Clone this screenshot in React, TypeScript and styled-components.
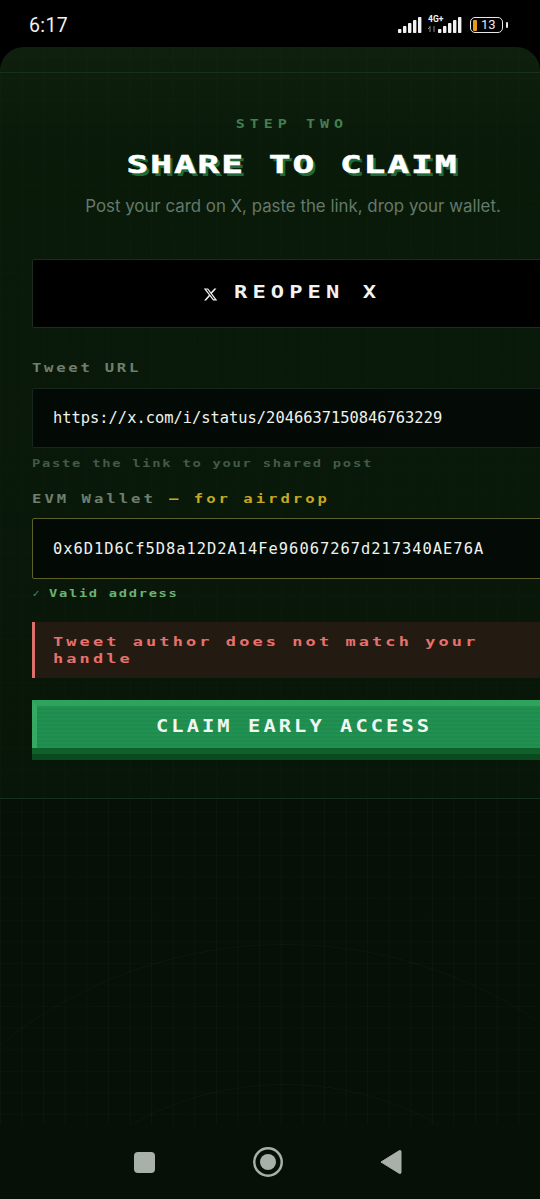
import React from 'react'
import styled, { createGlobalStyle } from 'styled-components'
import { FaXTwitter } from 'react-icons/fa6'

const pixelFont = `"DejaVu Sans Mono", "Liberation Mono", monospace`

const GlobalStyle = createGlobalStyle`
  html, body {
    margin: 0;
    padding: 0;
    width: 540px;
    height: 1199px;
    overflow: hidden;
    background: #000;
  }
  * { box-sizing: border-box; }
`

const Phone = styled.div`
  width: 540px;
  height: 1199px;
  display: flex;
  flex-direction: column;
  background: #000;
  overflow: hidden;
`

const StatusBar = styled.div`
  height: 47px;
  flex: none;
  display: flex;
  align-items: flex-start;
  justify-content: space-between;
  padding: 14px 37px 0 29px;
`

const Clock = styled.span`
  font: 400 19.5px/24px Roboto, sans-serif;
  letter-spacing: 0.4px;
  color: #f2f2f2;
`

const StatusIcons = styled.div`
  display: flex;
  align-items: flex-end;
  height: 19px;
`

const Sim = styled.div`
  position: relative;
  display: flex;
  margin-left: ${p => p.$gap}px;
`

const NetLabel = styled.span`
  position: absolute;
  left: -10px;
  top: -2px;
  font: 700 8.5px/8px Roboto, sans-serif;
  color: #f2f2f2;
`

const NetArrows = styled.svg`
  position: absolute;
  left: -10px;
  bottom: 1px;
`

const Battery = styled.div`
  position: relative;
  width: 33px;
  height: 16px;
  margin-left: 8px;
  border: 1.5px solid #e8e8e8;
  border-radius: 5px;
  display: flex;
  align-items: center;
  padding-left: 2px;

  &::after {
    content: '';
    position: absolute;
    right: -6px;
    top: 4px;
    width: 2px;
    height: 6px;
    border-radius: 1px;
    background: #e8e8e8;
  }
`

const BatteryLevel = styled.i`
  width: 4px;
  height: 11px;
  border-radius: 1px;
  background: #e59a1c;
`

const BatteryText = styled.span`
  margin-left: 4px;
  font: 400 13px/14px Roboto, sans-serif;
  color: #e8e8e8;
`

const Screen = styled.div`
  position: relative;
  flex: 1;
  display: flex;
  flex-direction: column;
  overflow: hidden;
  border-radius: 24px 24px 0 0;
  background-color: #061006;
  background-image:
    linear-gradient(rgba(70, 140, 80, 0.04) 1px, transparent 1px),
    linear-gradient(90deg, rgba(70, 140, 80, 0.06) 1px, transparent 1px);
  background-size: 21.6px 21.6px;
  background-position: 0 9px;
`

const Ring = styled.div`
  position: absolute;
  left: ${p => 285 - p.$radius}px;
  top: ${p => 1353 - p.$radius}px;
  width: ${p => p.$radius * 2}px;
  height: ${p => p.$radius * 2}px;
  border: 1px solid rgba(80, 150, 90, 0.06);
  border-radius: 50%;
`

const Panel = styled.section`
  position: relative;
  height: 752px;
  flex: none;
  overflow: hidden;
  border-bottom: 1px solid #14301a;
  background: linear-gradient(180deg, rgba(20, 42, 20, 0.6), rgba(12, 32, 12, 0.65) 12%, rgba(9, 26, 10, 0.6));
`

const PanelTop = styled.div`
  height: 26px;
  border-bottom: 1px solid #17331c;
`

const Content = styled.div`
  width: 520px;
  margin-left: 32px;
  padding-top: 44px;
  display: flex;
  flex-direction: column;
`

const Pixel = styled.span`
  display: inline-block;
  font-family: ${pixelFont};
  font-weight: 700;
  white-space: pre;
  font-size: ${p => p.$size}px;
  letter-spacing: ${p => p.$track}px;
  color: ${p => p.$color};
  transform: scaleX(${p => p.$stretch ?? 1.3});
  transform-origin: ${p => (p.$center ? 'center' : 'left')};
`

const AirdropNote = styled(Pixel)`
  margin-left: 32px;
`

const Centered = styled.div`
  display: flex;
  justify-content: center;
  align-items: center;
  height: ${p => p.$height}px;
  margin-top: ${p => p.$top ?? 0}px;
`

const Title = styled(Pixel)`
  text-shadow: 2px 3px 0 #1c6b38;
  -webkit-text-stroke: 0.5px #ffffff;
`

const Subtitle = styled.p`
  margin: 15px 0 0 2px;
  height: 24px;
  text-align: center;
  font: 400 16.85px/24px Inter, sans-serif;
  color: #64796a;
`

const ReopenButton = styled.button`
  height: 69px;
  margin-top: 41px;
  display: flex;
  align-items: center;
  justify-content: center;
  gap: 16px;
  background: #000;
  border: 1px solid #1c2c1e;
  border-radius: 2px;
  padding: 0 0 3px;
  color: #f0f0f0;

  svg {
    width: 15px;
    height: 15px;
    margin-top: 4px;
  }
`

const ReopenLabel = styled.div`
  width: 148px;
  text-align: left;
`

const Field = styled.div`
  display: flex;
  flex-direction: column;
  margin-top: ${p => p.$top}px;
`

const FieldLabel = styled.label`
  display: block;
  height: 16px;
  line-height: 16px;
  margin-bottom: ${p => p.$gap}px;
`

const TextInput = styled.input`
  width: 100%;
  height: ${p => (p.$valid ? 61 : 60)}px;
  padding: 0 20px;
  background: linear-gradient(90deg, #030a05, #040b06);
  border: 1px solid ${p => (p.$valid ? '#5c5f28' : '#14271a')};
  border-radius: 2px;
  outline: none;
  font: 400 15.4px/20px "DejaVu Sans Mono", monospace;
  letter-spacing: ${p => (p.$valid ? 1 : 0)}px;
  color: #f0f2ee;
`

const Note = styled.div`
  display: flex;
  align-items: center;
  height: 14px;
  margin-top: ${p => p.$top}px;
  line-height: 14px;
`

const CheckMark = styled.span`
  width: 17px;
  font: 400 10px/14px "DejaVu Sans", sans-serif;
  color: #4c8a57;
`

const ErrorBox = styled.div`
  height: 56px;
  margin-top: 21px;
  padding: 11px 0 0 18px;
  background: #231b12;
  border-left: 3px solid #dc706c;
  display: flex;
  flex-direction: column;
`

const ErrorLine = styled.div`
  height: 16.5px;
  line-height: 16.5px;
`

const ClaimButton = styled.button`
  position: relative;
  height: 60px;
  margin-top: 22px;
  padding: 0 0 15px;
  display: flex;
  align-items: center;
  justify-content: center;
  border: 0;
  border-top: 6px solid #2ea35c;
  border-left: 5px solid #35a862;
  background: repeating-linear-gradient(180deg, #209153 0 2px, #1f8c4e 2px 4px);

  &::after {
    content: '';
    position: absolute;
    left: -5px;
    right: 0;
    bottom: 0;
    height: 12px;
    background: linear-gradient(180deg, #0e5f28 0 6px, #0a4a1f 6px);
  }
`

const NavBar = styled.nav`
  position: absolute;
  left: 0;
  right: 0;
  bottom: 0;
  height: 74px;
  background: #061006;
  display: flex;
  align-items: center;
  padding-left: 134px;
  gap: 97.5px;
`

const bars = [4, 7, 10, 13, 16]

const Signal: React.FC = () => (
  <svg width="24" height="16" viewBox="0 0 24 16">
    {bars.map((h, i) => (
      <rect key={h} x={i * 5} y={16 - h} width="3.4" height={h} rx="0.8" fill="#f2f2f2" />
    ))}
  </svg>
)

const SquareIcon = () => (
  <svg width="21" height="21" viewBox="0 0 21 21">
    <rect width="21" height="21" rx="4" fill="#a9b0aa" />
  </svg>
)

const CircleIcon = () => (
  <svg width="30" height="30" viewBox="0 0 30 30">
    <circle cx="15" cy="15" r="13.75" fill="none" stroke="#a9b0aa" strokeWidth="2.5" />
    <circle cx="15" cy="15" r="8" fill="#a9b0aa" />
  </svg>
)

const BackIcon = () => (
  <svg width="22" height="26" viewBox="0 0 22 26">
    <path d="M1 13 19.4 1.6c.8-.5 1.6 0 1.6.9v21c0 .9-.8 1.4-1.6.9Z" fill="#a9b0aa" stroke="#a9b0aa" strokeLinejoin="round" />
  </svg>
)

export default function App() {
  return (
    <Phone>
      <GlobalStyle />
      <StatusBar>
        <Clock>6:17</Clock>
        <StatusIcons>
          <Signal />
          <Sim $gap={16}>
            <NetLabel>4G+</NetLabel>
            <NetArrows width="8" height="6" viewBox="0 0 8 6">
              <path d="M2 0v6M0 3l2-2 M6 0v6" stroke="#8a8a8a" strokeWidth="1" fill="none" />
            </NetArrows>
            <Signal />
          </Sim>
          <Battery>
            <BatteryLevel />
            <BatteryText>13</BatteryText>
          </Battery>
        </StatusIcons>
      </StatusBar>

      <Screen>
        <Ring $radius={456} />
        <Ring $radius={316} />
        <Panel>
          <PanelTop />
          <Content>
            <Centered $height={14}>
              <Pixel $center $size={12} $track={4} $stretch={1.25} $color="#437f50">STEP TWO</Pixel>
            </Centered>
            <Centered $height={30} $top={18}>
              <Title $center $size={25} $track={1.3} $stretch={1.45} $color="#ffffff">SHARE TO CLAIM</Title>
            </Centered>
            <Subtitle>Post your card on X, paste the link, drop your wallet.</Subtitle>

            <ReopenButton type="button">
              <FaXTwitter />
              <ReopenLabel>
                <Pixel $size={17} $track={3.9} $color="#f2f2f2">REOPEN X</Pixel>
              </ReopenLabel>
            </ReopenButton>

            <Field $top={31}>
              <FieldLabel $gap={13}>
                <Pixel $size={12} $track={2.1} $color="#6f7f6f">Tweet URL</Pixel>
              </FieldLabel>
              <TextInput readOnly value="https://x.com/i/status/2046637150846763229" />
              <Note $top={9}>
                <Pixel $size={11} $track={1.4} $stretch={1.25} $color="#445a47">Paste the link to your shared post</Pixel>
              </Note>
            </Field>

            <Field $top={19}>
              <FieldLabel $gap={12}>
                <Pixel $size={12} $track={2.3} $color="#6f7f6f">EVM Wallet </Pixel>
                <AirdropNote $size={12} $track={2.3} $color="#c4a823">— for airdrop</AirdropNote>
              </FieldLabel>
              <TextInput $valid readOnly value="0x6D1D6Cf5D8a12D2A14Fe96067267d217340AE76A" />
              <Note $top={8}>
                <CheckMark>✓</CheckMark>
                <Pixel $size={11} $track={1.35} $stretch={1.25} $color="#6cb274">Valid address</Pixel>
              </Note>
            </Field>

            <ErrorBox>
              <ErrorLine>
                <Pixel $size={13} $track={2.4} $color="#e8716d">Tweet author does not match your</Pixel>
              </ErrorLine>
              <ErrorLine>
                <Pixel $size={13} $track={2.4} $color="#e8716d">handle</Pixel>
              </ErrorLine>
            </ErrorBox>

            <ClaimButton type="button">
              <Pixel $center $size={17} $track={2.55} $stretch={1.2} $color="#eef8f0">CLAIM EARLY ACCESS</Pixel>
            </ClaimButton>
          </Content>
        </Panel>
        <NavBar>
          <SquareIcon />
          <CircleIcon />
          <BackIcon />
        </NavBar>
      </Screen>
    </Phone>
  )
}
